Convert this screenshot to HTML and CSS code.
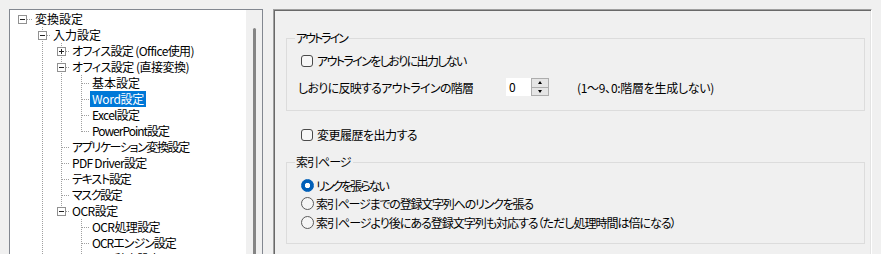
FILE: index.html
```html
<!DOCTYPE html>
<html lang="ja">
<head>
<meta charset="utf-8">
<title>変換設定</title>
<link rel="stylesheet" href="styles.css">
</head>
<body>
<div class="app">
  <div class="tree">
    <div class="tree-list">
      <div class="row"><span class="c root"><span class="box minus"></span></span><span class="t">変換設定</span></div>
      <div class="row"><span class="g"></span><span class="c full"><span class="box minus"></span></span><span class="t">入力設定</span></div>
      <div class="row"><span class="g"></span><span class="g v"></span><span class="c full"><span class="box plus"></span></span><span class="t sp-06">オフィス設定 (Office使用)</span></div>
      <div class="row"><span class="g"></span><span class="g v"></span><span class="c full"><span class="box minus"></span></span><span class="t sp-05">オフィス設定 (直接変換)</span></div>
      <div class="row"><span class="g"></span><span class="g v"></span><span class="g v"></span><span class="c full"></span><span class="t">基本設定</span></div>
      <div class="row"><span class="g"></span><span class="g v"></span><span class="g v"></span><span class="c full"></span><span class="t sel sp-03">Word設定</span></div>
      <div class="row"><span class="g"></span><span class="g v"></span><span class="g v"></span><span class="c full"></span><span class="t sp-07">Excel設定</span></div>
      <div class="row"><span class="g"></span><span class="g v"></span><span class="g v"></span><span class="c top"></span><span class="t sp-10">PowerPoint設定</span></div>
      <div class="row"><span class="g"></span><span class="g v"></span><span class="c full"></span><span class="t sp-14">アプリケーション変換設定</span></div>
      <div class="row"><span class="g"></span><span class="g v"></span><span class="c full"></span><span class="t sp-07">PDF Driver設定</span></div>
      <div class="row"><span class="g"></span><span class="g v"></span><span class="c full"></span><span class="t sp-12">テキスト設定</span></div>
      <div class="row"><span class="g"></span><span class="g v"></span><span class="c full"></span><span class="t sp-14">マスク設定</span></div>
      <div class="row"><span class="g"></span><span class="g v"></span><span class="c top"><span class="box minus"></span></span><span class="t sp-05">OCR設定</span></div>
      <div class="row"><span class="g"></span><span class="g v"></span><span class="g"></span><span class="c full"></span><span class="t sp-06">OCR処理設定</span></div>
      <div class="row"><span class="g"></span><span class="g v"></span><span class="g"></span><span class="c full"></span><span class="t sp-10">OCRエンジン設定</span></div>
      <div class="row"><span class="g"></span><span class="g v"></span><span class="g"></span><span class="c full"></span><span class="t sp-06">OCR辞書設定</span></div>
    </div>
    <div class="scrollbar"><div class="thumb"></div></div>
  </div>

  <div class="panel">
    <div class="group group-outline">
      <div class="legend sp-20">アウトライン</div>
      <div class="group-body outline-body">
        <div class="check-row"><span class="checkbox"></span><span class="sp-16">アウトラインをしおりに出力しない</span></div>
        <div class="level-row">
          <span class="level-label sp-07">しおりに反映するアウトラインの階層</span>
          <div class="spin">
            <div class="spin-input">0</div>
            <div class="spin-btns">
              <div class="spin-btn"><span class="arrow up"></span></div>
              <div class="spin-btn"><span class="arrow down"></span></div>
            </div>
          </div>
          <span class="note sp-03">(1～9、0:階層を生成しない)</span>
        </div>
      </div>
    </div>

    <div class="check-row history"><span class="checkbox"></span><span class="sp-05">変更履歴を出力する</span></div>

    <div class="group group-index">
      <div class="legend sp-10">索引ページ</div>
      <div class="group-body index-body">
        <div class="radio-row"><span class="radio checked"></span><span class="sp-20">リンクを張らない</span></div>
        <div class="radio-row"><span class="radio"></span><span class="sp-12">索引ページまでの登録文字列へのリンクを張る</span></div>
        <div class="radio-row"><span class="radio"></span><span class="sp-10">索引ページより後にある登録文字列も対応する（ただし処理時間は倍になる）</span></div>
      </div>
    </div>
  </div>
</div>
</body>
</html>
```

FILE: styles.css
```css
* { box-sizing: border-box; }

html, body {
  margin: 0;
  padding: 0;
  width: 881px;
  height: 254px;
  overflow: hidden;
  background: #f0f0f0;
}

body {
  font-family: "Noto Sans CJK JP", sans-serif;
  font-size: 12px;
  font-feature-settings: "palt";
  color: #000;
}

/* letter-spacing to approximate the narrow UI font */
.sp-03 { letter-spacing: -0.3px; }
.sp-05 { letter-spacing: -0.5px; }
.sp-06 { letter-spacing: -0.6px; }
.sp-07 { letter-spacing: -0.7px; }
.sp-10 { letter-spacing: -1px; }
.sp-12 { letter-spacing: -1.2px; }
.sp-14 { letter-spacing: -1.4px; }
.sp-16 { letter-spacing: -1.6px; }
.sp-20 { letter-spacing: -2px; }

.app {
  display: flex;
  gap: 10px;
  padding: 9px 0 0 9px;
  align-items: flex-start;
}

/* ---------- tree ---------- */
.tree {
  width: 254px;
  height: 270px;
  border: 1px solid #828790;
  background: #fff;
  display: flex;
  flex: none;
}

.tree-list {
  flex: 1;
  padding-top: 1px;
  overflow: hidden;
}

.row {
  display: flex;
  height: 16px;
  align-items: stretch;
  white-space: nowrap;
}

.g {
  flex: none;
  width: 20px;
  height: 16px;
}
.g:nth-child(even) { width: 19px; }

.g.v {
  background: repeating-linear-gradient(to bottom, #a0a0a0 0 1px, transparent 1px 2px) 12px 0 / 1px 16px no-repeat;
}

.c {
  flex: none;
  width: 21px;
  height: 16px;
  padding: 4px 0 0 8px;
  background:
    repeating-linear-gradient(to right, #a0a0a0 0 1px, transparent 1px 2px) 13px 8px / 8px 1px no-repeat;
}
.c.root {
  width: 23px;
  background:
    repeating-linear-gradient(to right, #a0a0a0 0 1px, transparent 1px 2px) 13px 8px / 10px 1px no-repeat;
}
.c.full {
  background:
    repeating-linear-gradient(to right, #a0a0a0 0 1px, transparent 1px 2px) 13px 8px / 8px 1px no-repeat,
    repeating-linear-gradient(to bottom, #a0a0a0 0 1px, transparent 1px 2px) 12px 0 / 1px 16px no-repeat;
}
.c.top {
  background:
    repeating-linear-gradient(to right, #a0a0a0 0 1px, transparent 1px 2px) 13px 8px / 8px 1px no-repeat,
    repeating-linear-gradient(to bottom, #a0a0a0 0 1px, transparent 1px 2px) 12px 0 / 1px 9px no-repeat;
}

.box {
  display: block;
  width: 9px;
  height: 9px;
  border: 1px solid #919191;
  background-color: #fff;
}
.box.minus {
  background: linear-gradient(#222, #222) 1px 3px / 5px 1px no-repeat, #fff;
}
.box.plus {
  background:
    linear-gradient(#222, #222) 1px 3px / 5px 1px no-repeat,
    linear-gradient(#222, #222) 3px 1px / 1px 5px no-repeat,
    #fff;
}

.t {
  padding: 0 2px;
  line-height: 16px;
}
.t.sel {
  background: #0078d7;
  color: #fff;
}

.scrollbar {
  flex: none;
  width: 16px;
  background: #f0f0f0;
  padding: 18px 0 0 7px;
}
.thumb {
  width: 3px;
  height: 300px;
  border-radius: 2px;
  background: #858585;
}

/* ---------- right panel ---------- */
.panel {
  width: 599px;
  height: 270px;
  flex: none;
  border: 1px solid;
  border-color: #a0a0a0 #fff #fff #a0a0a0;
  box-shadow: inset 1px 1px #696969, inset -1px -1px #e3e3e3;
  padding-top: 28px;
}

.group {
  border: 1px solid #dcdcdc;
  margin: 0 6px 0 12px;
}

.legend {
  width: fit-content;
  margin: -9px 0 0 8px;
  padding: 0 2px 0 1px;
  background: #f0f0f0;
  line-height: 16px;
}

.outline-body {
  padding: 6px 0 14px 11px;
}

.check-row {
  display: flex;
  align-items: center;
  height: 17px;
  margin-left: 3px;
}

.checkbox {
  flex: none;
  width: 12px;
  height: 12px;
  border: 1px solid #4a4a4a;
  border-radius: 3px;
  background: #f7f7f7;
  margin-right: 4px;
}

.level-row {
  display: flex;
  align-items: center;
  height: 18px;
  margin-top: 9px;
}

.level-label {
  width: 208px;
  flex: none;
}

.spin {
  display: flex;
  height: 18px;
}
.spin-input {
  width: 25px;
  background: #fff;
  padding-left: 3px;
  line-height: 18px;
}
.spin-btns {
  width: 18px;
  display: flex;
  flex-direction: column;
  border: 1px solid #adadad;
  background: #e5e5e5;
}
.spin-btn {
  flex: 1;
  display: flex;
  align-items: center;
  justify-content: center;
}
.spin-btn + .spin-btn {
  border-top: 1px solid #adadad;
}
.arrow {
  width: 1px;
  height: 0;
  border-left: 2px solid transparent;
  border-right: 2px solid transparent;
}
.arrow.up { border-bottom: 3px solid #000; }
.arrow.down { border-top: 3px solid #000; }

.note {
  margin-left: 28px;
}

.check-row.history {
  margin: 15px 0 0 27px;
}

.group-index {
  margin-top: 19px;
}

.index-body {
  padding: 6px 0 11.5px 14px;
}

.radio-row {
  display: flex;
  align-items: center;
  height: 18.5px;
}

.radio {
  flex: none;
  width: 13px;
  height: 13px;
  border-radius: 50%;
  border: 1px solid #5a5a5a;
  background: #f5f5f5;
  margin-right: 2px;
}
.radio.checked {
  border-color: #005fb8;
  background: radial-gradient(circle, #fff 0 2.4px, #005fb8 3px);
}
```
